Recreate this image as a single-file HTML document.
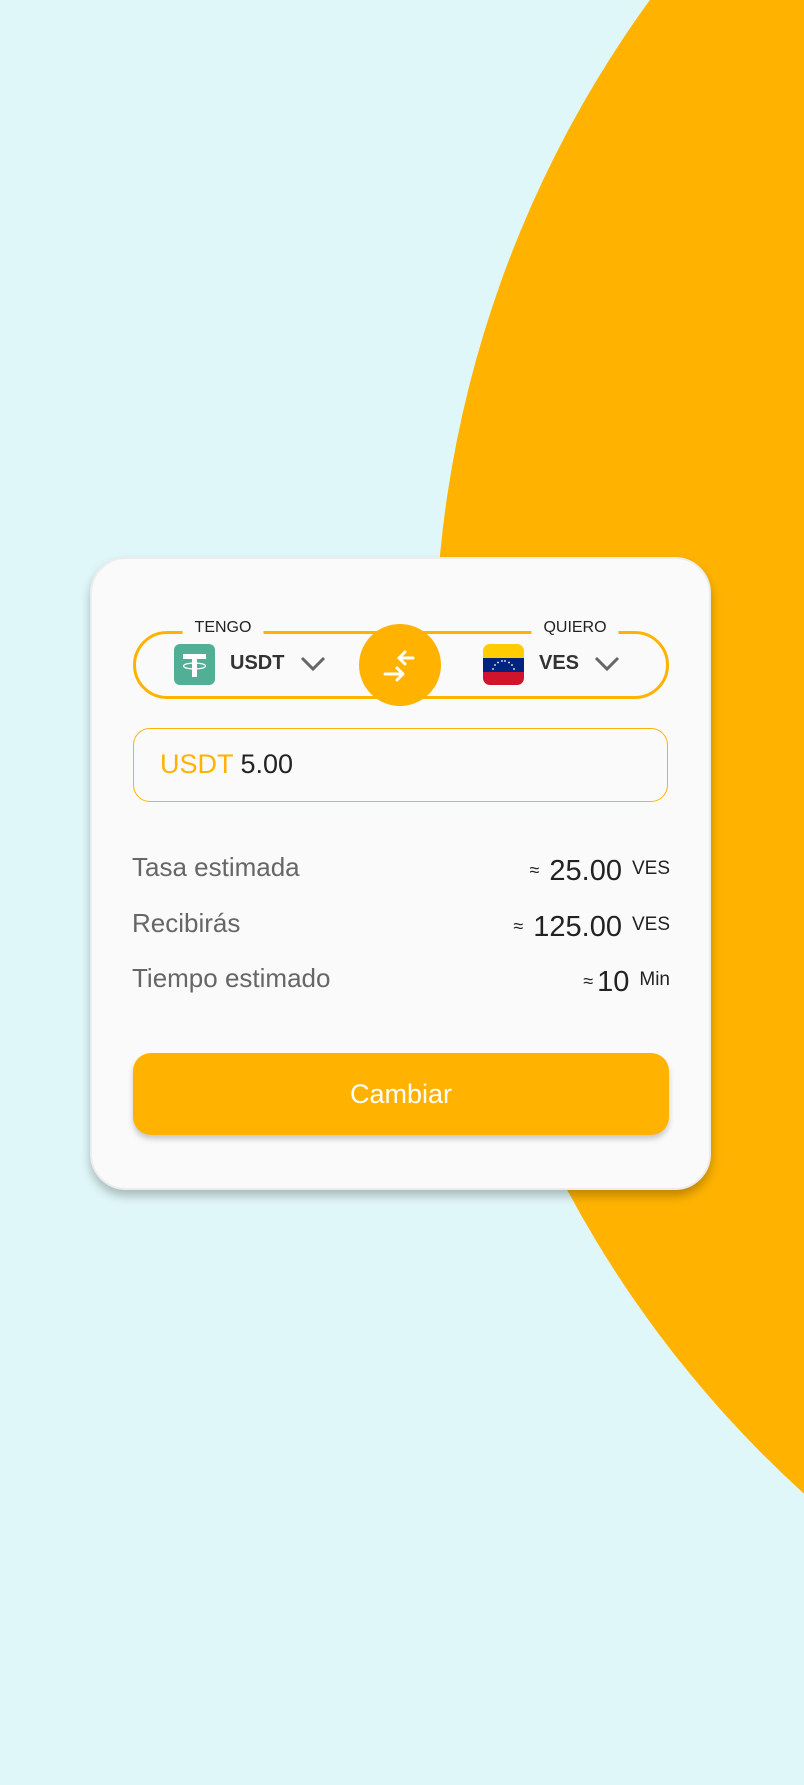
<!DOCTYPE html>
<html><head><meta charset="utf-8"><style>
*{margin:0;padding:0;box-sizing:border-box}
body{width:804px;height:1748px;background:#E0F7F9;position:relative;overflow:hidden;font-family:"Liberation Sans",sans-serif}
.big{position:absolute;left:435px;top:-463px;width:2248px;height:2248px;border-radius:50%;background:#FFB300}
.card{position:absolute;left:90px;top:557px;width:621px;height:633px;background:#FAFAFA;border-radius:36px;border:2px solid #ececec;box-shadow:0 6px 10px rgba(0,0,0,.25)}
.abs{position:absolute}
.pill{left:133px;top:631px;width:536px;height:68px;border:3px solid #FFB300;border-radius:34px}
.lbl{font-size:16px;color:#222;background:#FAFAFA;padding:0 12px;top:619px;transform:translateX(-50%)}
.swap{left:359px;top:624px;width:82px;height:82px;border-radius:50%;background:#FFB300}
.cur{font-size:20px;font-weight:bold;color:#333;top:652px}
.inp{left:133px;top:728px;width:535px;height:74px;border:1.5px solid #FFB300;border-radius:17px;font-size:27px;line-height:71px;padding-left:26px;color:#222}
.row{left:132px;width:538px;height:40px;font-size:26px;color:#666}
.row .r{position:absolute;right:0;bottom:4px;color:#222;white-space:nowrap}
.row .r b{font-weight:normal;font-size:29px}
.row .r i{font-style:normal;font-size:19px;margin-left:10px;vertical-align:6px}
.row .r s{text-decoration:none;font-size:18px;margin-right:10px;vertical-align:4px}
.btn{left:133px;top:1053px;width:536px;height:82px;background:#FFB300;border-radius:18px;box-shadow:0 4px 6px rgba(0,0,0,.2);color:#fff;font-size:27px;text-align:center;line-height:82px}
</style></head><body>
<div class="big"></div>
<div class="card"></div>
<div class="abs pill"></div>
<div class="abs lbl" style="left:223px">TENGO</div>
<div class="abs lbl" style="left:575px">QUIERO</div>
<svg class="abs" style="left:174px;top:644px" width="41" height="41" viewBox="0 0 41 41"><rect width="41" height="41" rx="6" fill="#50AF95"/><rect x="9" y="10" width="23" height="5" fill="#fff"/><rect x="18" y="10" width="5" height="23" fill="#fff"/><ellipse cx="20.5" cy="22" rx="11" ry="3" fill="none" stroke="#fff" stroke-width="1.3"/></svg>
<div class="abs cur" style="left:230px">USDT</div>
<svg class="abs" style="left:300px;top:656px" width="26" height="16"><path d="M2 2 L13 13 L24 2" fill="none" stroke="#666" stroke-width="3"/></svg>
<div class="abs swap"></div>
<svg class="abs" style="left:380px;top:644px" width="42" height="42" viewBox="0 0 42 42"><g fill="none" stroke="#fff" stroke-width="3" stroke-linecap="round" stroke-linejoin="round"><path d="M33 14 H19 M25 8 L19 14 L25 20"/><path d="M5 30 H23 M17 24 L23 30 L17 36"/></g></svg>
<svg class="abs" style="left:483px;top:644px" width="41" height="41" viewBox="0 0 41 41"><defs><clipPath id="c"><rect width="41" height="41" rx="7"/></clipPath></defs><g clip-path="url(#c)"><rect width="41" height="14" fill="#FFCC00"/><rect y="14" width="41" height="14" fill="#00247D"/><rect y="28" width="41" height="13" fill="#CF142B"/></g><g fill="#fff"><circle cx="10" cy="25" r=".9"/><circle cx="12" cy="21" r=".9"/><circle cx="15" cy="18.5" r=".9"/><circle cx="19" cy="17" r=".9"/><circle cx="22" cy="17" r=".9"/><circle cx="26" cy="18.5" r=".9"/><circle cx="29" cy="21" r=".9"/><circle cx="31" cy="25" r=".9"/></g></svg>
<div class="abs cur" style="left:539px">VES</div>
<svg class="abs" style="left:594px;top:656px" width="26" height="16"><path d="M2 2 L13 13 L24 2" fill="none" stroke="#666" stroke-width="3"/></svg>
<div class="abs inp"><span style="color:#FFB300">USDT</span> 5.00</div>
<div class="abs row" style="top:852px">Tasa estimada<div class="r"><s>≈</s><b>25.00</b><i>VES</i></div></div>
<div class="abs row" style="top:908px">Recibirás<div class="r"><s>≈</s><b>125.00</b><i>VES</i></div></div>
<div class="abs row" style="top:963px">Tiempo estimado<div class="r"><s style="margin-right:4px">≈</s><b>10</b><i>Min</i></div></div>
<div class="abs btn">Cambiar</div>
</body></html>
